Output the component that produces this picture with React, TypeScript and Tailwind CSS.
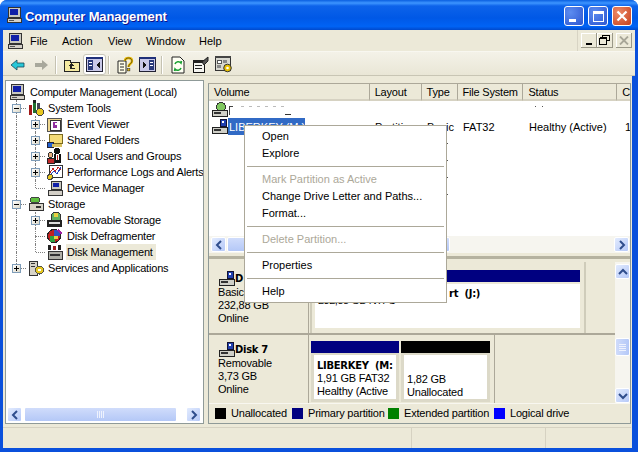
import type { ReactNode } from "react"

const font = "font-['Liberation_Sans','Noto_Sans',sans-serif] text-[11px] leading-none tracking-[-0.2px]"
const boldFont = "font-['DejaVu_Sans',sans-serif] text-[10px] font-bold tracking-[-0.3px]"

function Monitor({ size = 16 }: { size?: number }) {
  return (
    <svg width={size} height={size} viewBox="0 0 16 16" shapeRendering="crispEdges" className="shrink-0">
      <rect x="2" y="0" width="12" height="10" fill="#c8c8c0" stroke="#333" />
      <rect x="4" y="2" width="8" height="6" fill="#1020a8" />
      <rect x="1" y="11" width="14" height="4" fill="#d4d0c8" stroke="#333" />
      <rect x="3" y="13" width="5" height="1" fill="#555" />
    </svg>
  )
}

function TreeIcon({ kind }: { kind: string }) {
  const c = { shapeRendering: "crispEdges" as const }
  return (
    <svg width="16" height="16" viewBox="0 0 16 16" {...c} className="ml-[2px] shrink-0">
      {kind === "tools" && (
        <>
          <rect x="1" y="5" width="3" height="10" fill="#a01818" />
          <rect x="5" y="1" width="3" height="12" fill="#207030" />
          <rect x="5" y="0" width="3" height="3" fill="#222" />
          <rect x="9" y="3" width="3" height="7" fill="#445" />
          <circle cx="12" cy="12" r="3.5" fill="#e8c820" stroke="#444" />
        </>
      )}
      {kind === "event" && (
        <>
          <rect x="0" y="2" width="14" height="13" fill="#f0d890" stroke="#555" />
          <rect x="3" y="4" width="10" height="10" fill="#fff" stroke="#333" />
          <rect x="6" y="6" width="4" height="6" fill="#9030a0" />
          <rect x="8" y="7" width="2" height="2" fill="#fff" />
        </>
      )}
      {kind === "shared" && (
        <>
          <rect x="2" y="2" width="13" height="9" fill="#f4dc78" stroke="#7a6a20" />
          <rect x="0" y="10" width="6" height="5" fill="#2060d0" stroke="#223" />
          <rect x="5" y="12" width="10" height="3" fill="#d8c060" />
        </>
      )}
      {kind === "users" && (
        <>
          <circle cx="10" cy="3" r="3" fill="#111" />
          <rect x="7" y="6" width="7" height="9" fill="#111" />
          <rect x="9" y="6" width="3" height="6" fill="#fff" />
          <rect x="10" y="7" width="1" height="5" fill="#c01818" />
          <circle cx="3.5" cy="7" r="2.5" fill="#e8b080" stroke="#333" />
          <rect x="0" y="10" width="7" height="5" fill="#c02828" stroke="#222" />
        </>
      )}
      {kind === "perf" && (
        <>
          <rect x="2" y="1" width="13" height="12" fill="#fff" stroke="#333" />
          <path d="M3 9 L6 4 L8 8 L11 3 L14 6" fill="none" stroke="#c02020" />
          <path d="M3 11 L7 7 L10 10 L14 3" fill="none" stroke="#2040c0" />
          <circle cx="3" cy="13" r="2.5" fill="#e8c820" stroke="#444" />
        </>
      )}
      {kind === "device" && (
        <>
          <rect x="4" y="1" width="10" height="8" fill="#c8c8c0" stroke="#333" />
          <rect x="6" y="3" width="6" height="4" fill="#1020a8" />
          <rect x="1" y="10" width="14" height="5" fill="#d4d0c8" stroke="#333" />
        </>
      )}
      {kind === "storage" && (
        <>
          <ellipse cx="7" cy="4" rx="5" ry="3" fill="#60c040" stroke="#444" />
          <rect x="1" y="7" width="14" height="7" fill="#d8d4c8" stroke="#333" />
          <rect x="8" y="10" width="5" height="2" fill="#333" />
        </>
      )}
      {kind === "removable" && (
        <>
          <circle cx="9" cy="5" r="5" fill="#60b060" stroke="#333" />
          <rect x="7" y="1" width="4" height="4" fill="#e8d040" />
          <rect x="0" y="8" width="15" height="7" fill="#222" />
          <rect x="2" y="10" width="11" height="2" fill="#ddd" />
        </>
      )}
      {kind === "defrag" && (
        <>
          <circle cx="7" cy="8" r="6.5" fill="#c02020" stroke="#222" />
          <rect x="7" y="2" width="6" height="6" fill="#3050c0" />
          <rect x="3" y="8" width="5" height="6" fill="#30a040" />
          <rect x="7" y="8" width="4" height="3" fill="#e8d040" />
          <path d="M11 2 L15 6" stroke="#a020a0" strokeWidth="2" />
        </>
      )}
      {kind === "diskmgmt" && (
        <>
          <rect x="1" y="1" width="3" height="5" fill="#222" />
          <rect x="11" y="1" width="3" height="5" fill="#222" />
          <rect x="6" y="2" width="3" height="4" fill="#a02020" />
          <rect x="1" y="7" width="14" height="8" fill="#b0b0a8" stroke="#333" />
          <rect x="3" y="10" width="10" height="2" fill="#333" />
        </>
      )}
      {kind === "services" && (
        <>
          <rect x="1" y="1" width="8" height="14" fill="#d8d4c8" stroke="#333" />
          <rect x="3" y="3" width="4" height="1" fill="#333" />
          <rect x="3" y="6" width="4" height="1" fill="#333" />
          <circle cx="11.5" cy="10" r="4" fill="#e8c820" stroke="#554" />
          <circle cx="11.5" cy="10" r="1.2" fill="#fff" />
        </>
      )}
    </svg>
  )
}

function DriveIcon({ usb }: { usb?: boolean }) {
  return (
    <svg width="16" height="16" viewBox="0 0 16 16" shapeRendering="crispEdges" className="shrink-0">
      {usb ? (
        <>
          <rect x="8" y="0" width="6" height="7" fill="#2040b0" stroke="#113" />
          <rect x="10" y="2" width="2" height="2" fill="#fff" />
        </>
      ) : (
        <circle cx="9" cy="5" r="4.5" fill="#80c860" stroke="#333" />
      )}
      <rect x="0" y="8" width="15" height="6" fill="#d0d0c8" stroke="#222" />
      <rect x="2" y="10" width="7" height="2" fill="#333" />
    </svg>
  )
}

function Expander({ open }: { open?: boolean }) {
  return (
    <span className="relative z-10 flex h-[9px] w-[9px] items-center justify-center border border-[#7f9db9] bg-[linear-gradient(135deg,#ffffff,#dcd8c8)]">
      <span className="absolute h-px w-[5px] bg-black" />
      {!open && <span className="absolute h-[5px] w-px bg-black" />}
    </span>
  )
}

// one 19px wide column of the tree's guide lines
function Guide({ up, down, right, box, open }: { up?: boolean; down?: boolean; right?: boolean; box?: boolean; open?: boolean }) {
  return (
    <span className="relative flex h-4 w-[19px] shrink-0 items-center justify-center">
      {up && <span className="absolute left-[9px] top-0 h-2 border-l border-dotted border-[#808080]" />}
      {down && <span className="absolute bottom-0 left-[9px] h-2 border-l border-dotted border-[#808080]" />}
      {right && <span className="absolute left-[10px] top-[8px] w-[9px] border-t border-dotted border-[#808080]" />}
      {box && <Expander open={open} />}
    </span>
  )
}

type TreeRow = { label: string; icon: string; guides: ReactNode; selected?: boolean }

const treeRows: TreeRow[] = [
  { label: "System Tools", icon: "tools", guides: <Guide up down right box open /> },
  { label: "Event Viewer", icon: "event", guides: <><Guide up down /><Guide up down right box /></> },
  { label: "Shared Folders", icon: "shared", guides: <><Guide up down /><Guide up down right box /></> },
  { label: "Local Users and Groups", icon: "users", guides: <><Guide up down /><Guide up down right box /></> },
  { label: "Performance Logs and Alerts", icon: "perf", guides: <><Guide up down /><Guide up down right box /></> },
  { label: "Device Manager", icon: "device", guides: <><Guide up down /><Guide up right /></> },
  { label: "Storage", icon: "storage", guides: <Guide up down right box open /> },
  { label: "Removable Storage", icon: "removable", guides: <><Guide up down /><Guide up down right box /></> },
  { label: "Disk Defragmenter", icon: "defrag", guides: <><Guide up down /><Guide up down right /></> },
  { label: "Disk Management", icon: "diskmgmt", selected: true, guides: <><Guide up down /><Guide up right /></> },
  { label: "Services and Applications", icon: "services", guides: <Guide up right box /> },
]

function Chevron({ dir }: { dir: "left" | "right" | "up" | "down" }) {
  const d = {
    left: "M8 2 L4 6 L8 10",
    right: "M4 2 L8 6 L4 10",
    up: "M2 8 L6 4 L10 8",
    down: "M2 4 L6 8 L10 4",
  }[dir]
  return (
    <svg width="12" height="12" viewBox="0 0 12 12">
      <path d={d} fill="none" stroke="#2f4d8c" strokeWidth="2" />
    </svg>
  )
}

function ScrollButton({ dir }: { dir: "left" | "right" | "up" | "down" }) {
  return (
    <span className="flex h-[15px] w-[15px] shrink-0 items-center justify-center rounded-[2px] border border-white bg-[linear-gradient(135deg,#e2ebfe,#b6c9f8)]">
      <Chevron dir={dir} />
    </span>
  )
}

function Tool({ children, hot }: { children: ReactNode; hot?: boolean }) {
  return (
    <span className={`flex h-[21px] w-[23px] items-center justify-center rounded-[3px] ${hot ? "border border-[#c8c6ba] bg-white" : ""}`}>
      {children}
    </span>
  )
}

const Sep = ({ tight }: { tight?: boolean }) => (
  <span className={`${tight ? "ml-[2px] mr-[3px]" : "mx-[3px]"} h-[18px] w-[2px] border-l border-r border-l-[#c5c2b2] border-r-white`} />
)

function Toolbar() {
  return (
    <div className="flex h-[24px] items-center border-b border-[#c8c5b4] bg-[linear-gradient(180deg,#f4f2e8,#e9e6d6)] pl-[3px] pt-[2px]">
      <Tool>
        <svg width="16" height="12" viewBox="0 0 16 12"><path d="M1 6 L7 1 V4 H14 V8 H7 V11 Z" fill="#28c8d8" stroke="#184858" strokeWidth="0.8" /></svg>
      </Tool>
      <Tool>
        <svg width="16" height="12" viewBox="0 0 16 12"><path d="M15 6 L9 1 V4 H2 V8 H9 V11 Z" fill="#a8a89c" /></svg>
      </Tool>
      <Sep />
      <Tool>
        <svg width="18" height="15" viewBox="0 0 18 15" shapeRendering="crispEdges">
          <path d="M1 3 H7 V5 H16 V14 H1 Z" fill="#f4e9a0" stroke="#222" />
          <path d="M8 6 L5 9 H7 V12 H12 V11 H9 V9 H11 Z" fill="#222" />
        </svg>
      </Tool>
      <Tool hot>
        <svg width="17" height="15" viewBox="0 0 17 15" shapeRendering="crispEdges">
          <rect x="0.5" y="0.5" width="16" height="14" fill="#c8c8e8" stroke="#223" />
          <rect x="0" y="0" width="17" height="2" fill="#20307a" />
          <rect x="2" y="3" width="5" height="10" fill="#2a3a7a" />
          <rect x="3" y="5" width="3" height="1" fill="#fff" />
          <rect x="3" y="8" width="3" height="1" fill="#fff" />
          <path d="M14 5 L10 8 L14 11 Z" fill="#111" />
        </svg>
      </Tool>
      <Sep tight />
      <Tool>
        <svg width="18" height="18" viewBox="0 0 18 18">
          <path d="M2 5 H10 V17 H2 Z" fill="#fffde8" stroke="#222" />
          <path d="M4 8 H8 M4 11 H8 M4 14 H8" stroke="#222" />
          <path d="M9 5 C9 1 16 1 16 5 C16 8 12.5 7.5 12.5 11" fill="none" stroke="#e8b800" strokeWidth="2.4" />
          <path d="M9 5 C9 1 16 1 16 5 C16 8 12.5 7.5 12.5 11" fill="none" stroke="#222" strokeWidth="0.6" />
          <rect x="11.5" y="12.5" width="2.4" height="2.4" fill="#e8b800" stroke="#222" strokeWidth="0.5" />
        </svg>
      </Tool>
      <Tool>
        <svg width="17" height="15" viewBox="0 0 17 15" shapeRendering="crispEdges">
          <rect x="0.5" y="0.5" width="16" height="14" fill="#c8c8e8" stroke="#223" />
          <rect x="0" y="0" width="17" height="2" fill="#20307a" />
          <rect x="10" y="3" width="5" height="10" fill="#2a3a7a" />
          <rect x="11" y="5" width="3" height="1" fill="#fff" />
          <rect x="11" y="8" width="3" height="1" fill="#fff" />
          <path d="M4 5 L8 8 L4 11 Z" fill="#111" />
        </svg>
      </Tool>
      <Sep tight />
      <Tool>
        <svg width="14" height="18" viewBox="0 0 14 18">
          <path d="M1 1 H9 L13 5 V17 H1 Z" fill="#fffff4" stroke="#222" />
          <path d="M4 8 A3.5 3.5 0 0 1 10 7 L10.5 5 M10 12 A3.5 3.5 0 0 1 4 13 L3.5 15" fill="none" stroke="#18a030" strokeWidth="1.6" />
        </svg>
      </Tool>
      <Tool>
        <svg width="18" height="17" viewBox="0 0 18 17" shapeRendering="crispEdges">
          <rect x="1" y="4" width="11" height="12" fill="#f4f4f0" stroke="#111" />
          <rect x="1" y="4" width="11" height="3" fill="#222" />
          <path d="M3 9 H10 M3 12 H10" stroke="#222" />
          <path d="M10 6 L16 1 V5 L12 9 Z" fill="#555" stroke="#222" shapeRendering="auto" />
        </svg>
      </Tool>
      <Tool>
        <svg width="18" height="17" viewBox="0 0 18 17" shapeRendering="crispEdges">
          <rect x="0.5" y="0.5" width="15" height="14" fill="#d8d8d0" stroke="#333" />
          <rect x="0" y="0" width="16" height="2" fill="#444" />
          <rect x="2" y="4" width="4" height="3" fill="#fff" stroke="#555" />
          <rect x="8" y="4" width="4" height="3" fill="#888" />
          <rect x="2" y="9" width="4" height="3" fill="#888" />
          <circle cx="12.5" cy="12" r="3.8" fill="#e8c000" stroke="#333" shapeRendering="auto" />
          <circle cx="12.5" cy="12" r="1.3" fill="#fff" shapeRendering="auto" />
        </svg>
      </Tool>
    </div>
  )
}

function TitleBar() {
  return (
    <div className="flex h-[30px] shrink-0 items-center rounded-t-[7px] bg-[linear-gradient(180deg,#0a5fe0_0%,#3d95ff_10%,#0d63ea_20%,#0058e6_60%,#0063f5_88%,#0049cc_100%)] pl-[6px] pr-[6px]">
      <Monitor />
      <span className="ml-[3px] flex-1 pt-[3px] font-['Liberation_Sans',sans-serif] text-[13px] font-bold tracking-[-0.15px] text-white [text-shadow:1px_1px_#0f1089]">Computer Management</span>
      <span className="flex gap-[4px] pt-[2px]">
        <span className="flex h-[20px] w-[20px] items-end rounded-[3px] border border-white bg-[radial-gradient(circle_at_30%_30%,#5c8cf0,#2d56d0)] pb-[3px] pl-[4px]">
          <span className="h-[3px] w-[7px] bg-white" />
        </span>
        <span className="flex h-[20px] w-[20px] items-center justify-center rounded-[3px] border border-white bg-[radial-gradient(circle_at_30%_30%,#5c8cf0,#2d56d0)]">
          <span className="h-[11px] w-[11px] border border-t-[3px] border-white" />
        </span>
        <span className="flex h-[20px] w-[20px] items-center justify-center rounded-[3px] border border-white bg-[radial-gradient(circle_at_30%_30%,#ec8a68,#c8401c)]">
          <svg width="12" height="12" viewBox="0 0 12 12"><path d="M1.5 1.5 L10.5 10.5 M10.5 1.5 L1.5 10.5" stroke="#fff" strokeWidth="2.2" /></svg>
        </span>
      </span>
    </div>
  )
}

function MenuBar() {
  const items = [
    { label: "File", w: "w-[32px]" },
    { label: "Action", w: "w-[46px]" },
    { label: "View", w: "w-[38px]" },
    { label: "Window", w: "w-[53px]" },
    { label: "Help", w: "w-[36px]" },
  ]
  return (
    <div className="flex h-[22px] items-center border-b border-[#f8f7f0] bg-[#ece9d8] pl-[4px]">
      <Monitor />
      <span className="w-[7px]" />
      {items.map((m) => (
        <span key={m.label} className={`${m.w} pt-[2px] tracking-normal`}>{m.label}</span>
      ))}
      <span className="flex-1" />
      <span className="mr-[3px] flex h-full items-center border-l border-[#d8d4c4] pl-[3px]">
        <MdiButton>
          <span className="mt-[7px] h-[2px] w-[6px] bg-black" />
        </MdiButton>
        <MdiButton>
          <svg width="11" height="10" viewBox="0 0 11 10" shapeRendering="crispEdges"><path d="M3.5 2.5 V0.5 H10.5 V5.5 H8 M0.5 3.5 H7.5 V9.5 H0.5 Z M0.5 2.5 H7.5" fill="none" stroke="#000" /></svg>
        </MdiButton>
        <span className="w-[3px]" />
        <MdiButton>
          <svg width="10" height="9" viewBox="0 0 10 9"><path d="M1 0.5 L9 8.5 M9 0.5 L1 8.5" stroke="#a8a698" strokeWidth="1.8" /></svg>
        </MdiButton>
      </span>
    </div>
  )
}

function MdiButton({ children }: { children: ReactNode }) {
  return (
    <span className="flex h-[15px] w-[16px] items-center justify-center border-b border-r border-[#9a9888] bg-[#ece9d8] shadow-[inset_1px_1px_0_#fff]">
      {children}
    </span>
  )
}

const columns = [
  { label: "Volume", w: "w-[161px]" },
  { label: "Layout", w: "w-[52px]" },
  { label: "Type", w: "w-[36px]" },
  { label: "File System", w: "w-[66px]" },
  { label: "Status", w: "w-[94px]" },
  { label: "C", w: "flex-1" },
]

function Speck({ w = "w-px", color = "bg-[#555]" }: { w?: string; color?: string }) {
  return <span className={`${w} ${color} h-px shrink-0`} />
}

function VolumeList() {
  return (
    <div className="flex h-[152px] shrink-0 flex-col overflow-hidden bg-white">
      <div className="flex h-[17px] shrink-0 items-stretch bg-[#ece9d8]">
        {columns.map((c) => (
          <span key={c.label} className={`${c.w} flex items-center border-b-2 border-r border-b-[#d6d2c2] border-r-[#aca899] pl-[5px] pt-[2px] ${c.label === "C" ? "border-r-0" : ""}`}>
            {c.label}
          </span>
        ))}
      </div>
      <div className="flex h-[17px] shrink-0 items-center pl-[3px]">
        <DriveIcon />
        <span className="ml-px mt-[1px] h-[9px] w-[4px] border-l border-t border-[#444]" />
        <span className="ml-[8px] flex -translate-y-[3px] gap-[5px]">
          {[0, 1, 2, 3, 4, 5].map((i) => <Speck key={i} w="w-[3px]" color="bg-[#bbb]" />)}
        </span>
        <span className="ml-[1px] mt-[10px] h-px w-[6px] bg-[#333]" />
        <span className="ml-[244px] flex -translate-y-[3px] gap-[6px]"><Speck /><Speck /></span>
      </div>
      <div className="flex h-[17px] shrink-0 items-center whitespace-nowrap pl-[3px] tracking-normal">
        <DriveIcon usb />
        <span className="flex h-[17px] w-[77px] shrink-0 items-center bg-[#316ac5] pl-[1px] pt-px text-white">LIBERKEY (M:)</span>
        <span className="ml-[70px] w-[52px] shrink-0 pt-px">Partition</span>
        <span className="w-[36px] shrink-0 pt-px">Basic</span>
        <span className="w-[66px] shrink-0 pt-px">FAT32</span>
        <span className="w-[96px] shrink-0 pt-px">Healthy (Active)</span>
        <span className="shrink-0 pt-px">1,</span>
      </div>
      {[0, 1, 2, 3].map((i) => (
        <div key={i} className="flex h-[17px] shrink-0 items-center pl-[238px]">
          <Speck />
          {i === 2 && <span className="ml-[17px] h-px w-px bg-[#555]" />}
          {i < 3 && <span className={i === 2 ? "ml-[165px] h-[2px] w-px bg-[#444]" : "ml-[183px] h-[2px] w-px bg-[#444]"} />}
        </div>
      ))}
    </div>
  )
}

function Partition({ bar, width, children }: { bar: string; width: string; children: ReactNode }) {
  return (
    <div className={`${width} flex h-full flex-col p-[1px]`}>
      <div className={`${bar} h-[12px] shrink-0`} />
      <div className="flex-1 overflow-hidden border-x-[3px] border-b-[3px] border-t-[2px] border-[#dcd9c8] bg-white pl-[3px] pt-[6px] text-black">
        {children}
      </div>
    </div>
  )
}

function DiskInfo({ name, lines, top }: { name: string; lines: string[]; top: string }) {
  return (
    <div className={`${top} flex w-[100px] shrink-0 flex-col gap-[3px] border-r border-[#aca899] pl-[9px]`}>
      <div className="-mb-[2px] flex h-[14px] items-center pl-[1px]">
        <DriveIcon usb />
        <span className={boldFont}>{name}</span>
      </div>
      {lines.map((l) => (
        <span key={l} className="h-[10px]">{l}</span>
      ))}
    </div>
  )
}

function DiskArea() {
  return (
    <div className="flex min-h-0 flex-1">
      <div className="flex min-w-0 flex-1 flex-col">
        <div className="flex h-[73px] shrink-0 border-b-2 border-[#aca899]">
          <DiskInfo name="D" top="pt-[10px]" lines={["Basic", "232,88 GB", "Online"]} />
          <div className="ml-[1px] h-full w-[276px] border-x-2 border-[#cfccba] pb-[5px] pl-[3px] pr-[4px] pt-[8px]">
            <div className="h-[12px] bg-[#000080]" />
            <div className="mt-[2px] flex h-[44px] flex-col whitespace-pre bg-white pt-[5px]">
              <span className={`pl-[134px] ${boldFont}`}>rt  (J:)</span>
              <span className="-mt-[4px] pl-[3px] tracking-[-0.5px]">232,88 GB NTFS</span>
            </div>
          </div>
        </div>
        <div className="flex h-[68px] shrink-0">
          <DiskInfo name="Disk 7" top="pt-[8px]" lines={["Removable", "3,73 GB", "Online"]} />
          <div className="flex h-full w-[186px] border-r border-[#aca899] pl-[1px] pt-[5px]">
            <Partition bar="bg-[#000080]" width="w-[90px]">
              <div className="flex flex-col gap-[2px] whitespace-pre">
                <span className={boldFont}>LIBERKEY  (M:</span>
                <span>1,91 GB FAT32</span>
                <span>Healthy (Active</span>
              </div>
            </Partition>
            <Partition bar="bg-black" width="w-[91px]">
              <div className="flex flex-col gap-[2px] pt-[13px]">
                <span>1,82 GB</span>
                <span>Unallocated</span>
              </div>
            </Partition>
          </div>
        </div>
      </div>
      <div className="flex w-[15px] shrink-0 flex-col items-center bg-[#f6f5ef] pt-[2px]">
        <ScrollButton dir="up" />
        <span className="mt-[59px] flex h-[18px] w-[15px] flex-col items-center justify-center gap-px rounded-[2px] border border-white bg-[linear-gradient(90deg,#d0dcfb,#b4c8f7)]">
          {[0, 1, 2, 3].map((i) => <span key={i} className="h-px w-[7px] bg-[#eef2fd]" />)}
        </span>
        <span className="flex-1" />
        <ScrollButton dir="down" />
      </div>
    </div>
  )
}

const legend = [
  { label: "Unallocated", color: "bg-black", w: "w-[77px]" },
  { label: "Primary partition", color: "bg-[#000080]", w: "w-[96px]" },
  { label: "Extended partition", color: "bg-[#008000]", w: "w-[106px]" },
  { label: "Logical drive", color: "bg-[#0000ff]", w: "w-auto" },
]

function ContextMenu() {
  const Item = ({ children, off }: { children: string; off?: boolean }) => (
    <div className={`flex h-[17px] items-center pl-[17px] tracking-normal ${off ? "text-[#aca899]" : "text-black"}`}>{children}</div>
  )
  const Line = () => <div className="mx-[2px] my-[4px] h-[1px] bg-[#aca899]" />
  return (
    <div className="absolute left-[244px] top-[125px] z-20 h-[178px] w-[203px] border border-[#aca899] bg-white pt-[2px]">
      <Item>Open</Item>
      <Item>Explore</Item>
      <Line />
      <Item off>Mark Partition as Active</Item>
      <Item>Change Drive Letter and Paths...</Item>
      <Item>Format...</Item>
      <Line />
      <Item off>Delete Partition...</Item>
      <Line />
      <Item>Properties</Item>
      <Line />
      <Item>Help</Item>
    </div>
  )
}

export default function App() {
  return (
    <div className={`${font} relative flex h-[452px] w-[639px] flex-col overflow-hidden bg-white text-black`}>
      <div className="flex h-full w-[638px] flex-col rounded-t-[7px] bg-[#0a50dc]">
        <TitleBar />
        <div className="ml-[3px] mr-[3px] flex min-h-0 flex-1 flex-col">
          <MenuBar />
          <Toolbar />
          <div className="mr-[3px] flex min-h-0 flex-1 flex-col bg-[#ece9d8] pr-[1px]">
            <div className="flex min-h-0 flex-1 gap-[4px] pb-[3px] pl-[2px] pt-[4px]">
              <div className="flex w-[199px] shrink-0 flex-col border border-[#8f9a98] bg-white">
                <div className="flex flex-1 flex-col pt-[3px]">
                  <div className="flex h-4 items-center pl-[3px]">
                    <Monitor />
                    <span className="ml-[5px]">Computer Management (Local)</span>
                  </div>
                  {treeRows.map((r) => (
                    <div key={r.label} className="flex h-4 items-center overflow-hidden whitespace-nowrap pl-px">
                      {r.guides}
                      <TreeIcon kind={r.icon} />
                      <span className={`ml-[3px] flex h-4 shrink-0 items-center px-px ${r.selected ? "w-[90px] bg-[#ece9d8]" : ""}`}>{r.label}</span>
                    </div>
                  ))}
                </div>
                <div className="flex h-[17px] items-center pl-px pr-[2px]">
                  <ScrollButton dir="left" />
                  <span className="ml-[2px] flex h-[15px] w-[153px] items-center justify-center gap-px rounded-[2px] border border-white bg-[linear-gradient(180deg,#d0dcfb,#b4c8f7)]">
                    {[0, 1, 2, 3].map((i) => <span key={i} className="h-[7px] w-px bg-[#eef2fd]" />)}
                  </span>
                  <span className="flex-1" />
                  <ScrollButton dir="right" />
                </div>
              </div>
              <div className="mt-[3px] flex min-w-0 flex-1 flex-col border border-[#8f9a98] border-t-[#aca899]">
                <VolumeList />
                <div className="flex h-[17px] shrink-0 items-center bg-[#f6f5ef] pl-[2px] pr-px">
                  <ScrollButton dir="left" />
                  <span className="ml-px h-[15px] w-[223px] rounded-[2px] border border-white bg-[linear-gradient(180deg,#d0dcfb,#b4c8f7)]" />
                  <span className="flex-1" />
                  <ScrollButton dir="right" />
                </div>
                <div className="h-[3px] shrink-0 bg-[#ece9d8]" />
                <div className="h-[3px] shrink-0 bg-[#b5b2a0]" />
                <div className="h-[3px] shrink-0 bg-[#ece9d8]" />
                <DiskArea />
                <div className="flex h-[20px] shrink-0 items-center whitespace-nowrap border-t border-[#f8f7f0] pl-[6px]">
                  {legend.map((l) => (
                    <span key={l.label} className={`${l.w} flex items-center`}>
                      <span className={`${l.color} mr-[5px] h-[11px] w-[11px] shrink-0`} />
                      {l.label}
                    </span>
                  ))}
                </div>
              </div>
            </div>
            <div className="flex h-[21px] shrink-0 border-t border-[#d6d2c2]">
              <span className="w-[409px] border-r border-[#d6d2c2]" />
              <span className="w-[134px] border-r border-[#d6d2c2]" />
            </div>
          </div>
          <div className="h-[4px] shrink-0" />
        </div>
      </div>
      <ContextMenu />
    </div>
  )
}
